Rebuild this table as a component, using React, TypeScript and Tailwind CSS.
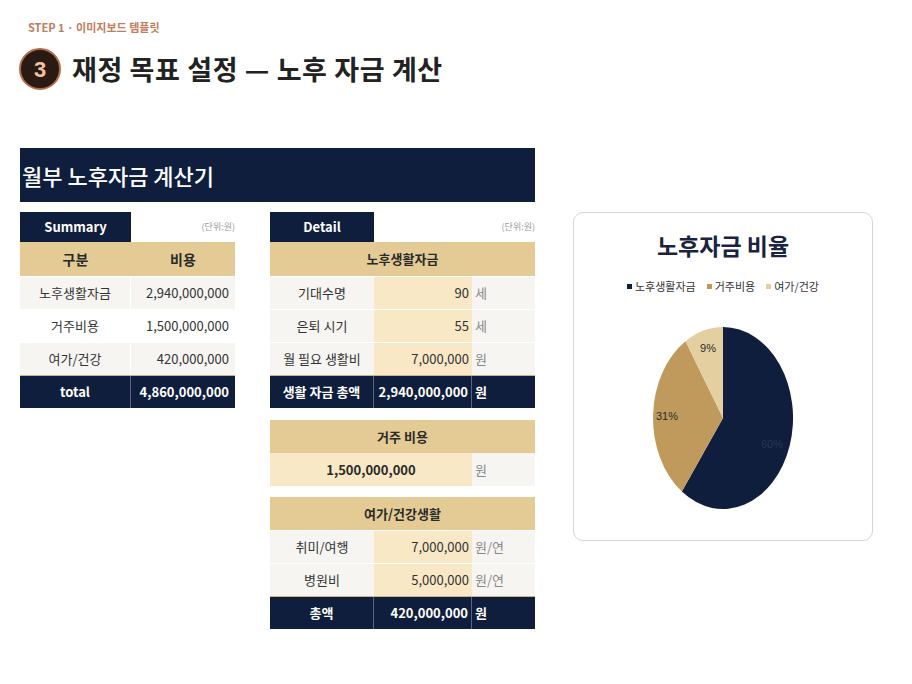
import React from 'react';

const KR = "font-['Noto_Sans_CJK_KR','Noto_Sans',sans-serif]";

const NAVY = 'bg-[#0f1e3c]';
const TAN = 'bg-[#e4cb95]';
const CREAM = 'bg-[#f8e8c6]';
const LIGHT = 'bg-[#f6f5f2]';

function SummaryTable() {
  const rows = [
    { label: '노후생활자금', value: '2,940,000,000', bg: LIGHT },
    { label: '거주비용', value: '1,500,000,000', bg: 'bg-white' },
    { label: '여가/건강', value: '420,000,000', bg: LIGHT },
  ];
  return (
    <div className="w-[215px] flex flex-col">
      <div className="flex h-[30px]">
        <div className={`${NAVY} w-[111px] flex items-center justify-center text-white font-bold text-[13px]`}>Summary</div>
        <div className="flex-1 flex items-center justify-end text-[9px] text-[#9a9a9a]">(단위:원)</div>
      </div>
      <div className={`${TAN} flex h-[34px] text-[14px] font-bold text-[#2a2a2a]`}>
        <div className="w-[111px] flex items-center justify-center">구분</div>
        <div className="flex-1 flex items-center justify-center">비용</div>
      </div>
      {rows.map((r) => (
        <div key={r.label} className={`${r.bg} flex h-[33px] border-t border-white text-[13px] text-[#333]`}>
          <div className="w-[111px] flex items-center justify-center border-r border-white">{r.label}</div>
          <div className="flex-1 flex items-center justify-end pr-[6px]">{r.value}</div>
        </div>
      ))}
      <div className={`${NAVY} flex h-[33px] border-t border-[#c9b488] text-[13px] font-bold text-white`}>
        <div className="w-[111px] flex items-center justify-center border-r border-[#5a6580]">total</div>
        <div className="flex-1 flex items-center justify-end pr-[6px]">4,860,000,000</div>
      </div>
    </div>
  );
}

function TanHeader({ children }: { children: React.ReactNode }) {
  return (
    <div className={`${TAN} h-[33px] flex items-center justify-center text-[13px] font-bold text-[#2a2a2a]`}>
      {children}
    </div>
  );
}

function DetailRow({ label, value, unit }: { label: string; value: string; unit: string }) {
  return (
    <div className="flex h-[33px] border-t border-white text-[13px] text-[#333]">
      <div className={`${LIGHT} w-[104px] flex items-center justify-center`}>{label}</div>
      <div className={`${CREAM} w-[98px] flex items-center justify-end pr-[3px]`}>{value}</div>
      <div className={`${LIGHT} flex-1 flex items-center pl-[3px] text-[#888]`}>{unit}</div>
    </div>
  );
}

function TotalRow({ label, value }: { label: string; value: string }) {
  return (
    <div className={`${NAVY} flex h-[33px] border-t border-[#c9b488] text-[13px] font-bold text-white`}>
      <div className="w-[104px] flex items-center justify-center border-r border-[#5a6580]">{label}</div>
      <div className="w-[98px] flex items-center justify-end pr-[3px] border-r border-[#5a6580]">{value}</div>
      <div className="flex-1 flex items-center pl-[3px]">원</div>
    </div>
  );
}

function DetailTable() {
  return (
    <div className="w-[265px] flex flex-col">
      <div className="flex h-[30px]">
        <div className={`${NAVY} w-[104px] flex items-center justify-center text-white font-bold text-[13px]`}>Detail</div>
        <div className="flex-1 flex items-center justify-end text-[9px] text-[#9a9a9a]">(단위:원)</div>
      </div>
      <div className={`${TAN} h-[34px] flex items-center justify-center text-[13px] font-bold text-[#2a2a2a]`}>노후생활자금</div>
      <DetailRow label="기대수명" value="90" unit="세" />
      <DetailRow label="은퇴 시기" value="55" unit="세" />
      <DetailRow label="월 필요 생활비" value="7,000,000" unit="원" />
      <TotalRow label="생활 자금 총액" value="2,940,000,000" />

      <div className="mt-[12px]">
        <TanHeader>거주 비용</TanHeader>
        <div className="flex h-[33px] text-[13px]">
          <div className={`${CREAM} w-[202px] flex items-center justify-center font-bold text-[#2a2a2a]`}>1,500,000,000</div>
          <div className={`${LIGHT} flex-1 flex items-center pl-[3px] text-[#888]`}>원</div>
        </div>
      </div>

      <div className="mt-[11px]">
        <TanHeader>여가/건강생활</TanHeader>
        <DetailRow label="취미/여행" value="7,000,000" unit="원/연" />
        <DetailRow label="병원비" value="5,000,000" unit="원/연" />
        <TotalRow label="총액" value="420,000,000" />
      </div>
    </div>
  );
}

function PieCard() {
  const legend = [
    { c: 'bg-[#0f1e3c]', t: '노후생활자금' },
    { c: 'bg-[#bf9a5c]', t: '거주비용' },
    { c: 'bg-[#e4cfa0]', t: '여가/건강' },
  ];
  return (
    <div className="w-[300px] h-[329px] rounded-[10px] border border-[#d6d6d6] bg-white flex flex-col items-center">
      <div className="mt-[14px] text-[23px] font-bold text-[#1a2340] leading-[36px]">노후자금 비율</div>
      <div className="mt-[15px] flex items-center gap-[11px] text-[11px] text-[#333] leading-[16px]">
        {legend.map((l) => (
          <div key={l.t} className="flex items-center gap-[3px]">
            <span className={`${l.c} w-[5px] h-[5px]`} />
            <span>{l.t}</span>
          </div>
        ))}
      </div>
      <svg width="140" height="182" viewBox="0 0 140 182" className="mt-[33px]">
        <path d="M70 91 L70 0 A70 91 0 1 1 28.86 164.6 Z" fill="#0f1e3c" />
        <path d="M70 91 L28.86 164.6 A70 91 0 0 1 32.5 14.2 Z" fill="#bf9a5c" />
        <path d="M70 91 L32.5 14.2 A70 91 0 0 1 70 0 Z" fill="#e4cfa0" />
        <text x="55" y="25" textAnchor="middle" fontSize="11" fill="#2a2a2a" fontFamily="Liberation Sans, sans-serif">9%</text>
        <text x="14" y="93" textAnchor="middle" fontSize="11" fill="#2a2a2a" fontFamily="Liberation Sans, sans-serif">31%</text>
        <text x="119" y="121" textAnchor="middle" fontSize="11" fill="#2b3654" fontFamily="Liberation Sans, sans-serif">60%</text>
      </svg>
    </div>
  );
}

export default function App() {
  return (
    <div className={`${KR} w-[912px] h-[684px] bg-white overflow-hidden`}>
      <div className="pt-[19px] pl-[28px] text-[11px] font-bold text-[#c27d5c] leading-[16px]">STEP 1 · 이미지보드 템플릿</div>
      <div className="mt-[13px] pl-[19px] flex items-center gap-[11px]">
        <div className="w-[42px] h-[42px] rounded-full bg-[#2a1a14] border-[2px] border-[#b06c4a] flex items-center justify-center text-[#f2c2a2] text-[22px] font-bold font-['Liberation_Sans',sans-serif]">
          3
        </div>
        <div className="text-[27px] font-bold text-[#222] leading-[40px] tracking-[0.6px]">재정 목표 설정 — 노후 자금 계산</div>
      </div>
      <div className="mt-[58px] ml-[20px]">
        <div className={`${NAVY} w-[515px] h-[54px] flex items-center pl-[2px] text-white text-[22px] font-medium`}>
          월부 노후자금 계산기
        </div>
        <div className="mt-[10px] flex items-start">
          <SummaryTable />
          <div className="ml-[35px]">
            <DetailTable />
          </div>
          <div className="ml-[38px]">
            <PieCard />
          </div>
        </div>
      </div>
    </div>
  );
}
